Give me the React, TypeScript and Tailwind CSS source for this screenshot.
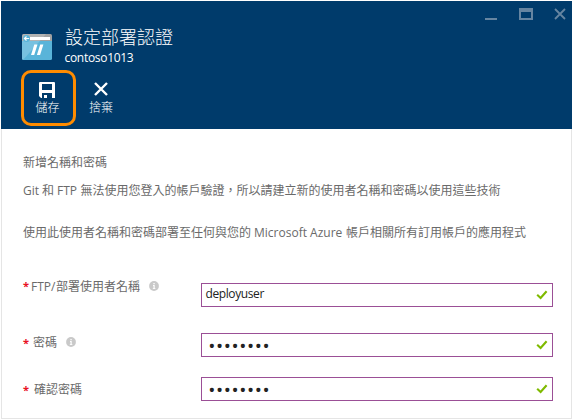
import type { ReactNode } from 'react';

const Latin = ({ className, children }: { className: string; children: ReactNode }) => (
  <span className={`inline-block whitespace-pre ${className}`}>{children}</span>
);

const InfoIcon = ({ className }: { className: string }) => (
  <svg viewBox="0 0 10 10" className={`h-2.5 w-2.5 shrink-0 ${className}`}>
    <circle cx="5" cy="5" r="4.9" fill="#c9c9c9" />
    <path d="M4 4.1h1.7v3.2h.7v.8H3.8v-.8h.7V4.9H4zM4.4 1.9h1.3v1.3H4.4z" fill="#fff" />
  </svg>
);

const CheckIcon = () => (
  <svg viewBox="0 0 12 10" className="h-2.5 w-3">
    <path d="M1.2 4.8 4.6 8 10.6 1.2" fill="none" stroke="#7fba00" strokeWidth="2.1" />
  </svg>
);

const AppIcon = () => (
  <svg viewBox="0 0 30 26" className="h-[26px] w-[30px] shrink-0">
    <path d="M0 7h30v17.5q0 1.5-1.5 1.5h-27Q0 26 0 24.5z" fill="#59b4d9" />
    <path d="M1.5 0h27Q30 0 30 1.5V7H0V1.5Q0 0 1.5 0z" fill="#a0a1a2" />
    <path d="M1.5 0H24L1 26Q0 26 0 24.5v-23Q0 0 1.5 0z" fill="#fff" fillOpacity=".18" />
    <path d="M8 3h20v3H8z" fill="#fff" />
    <circle cx="4.5" cy="4.5" r="3.5" fill="#59b4d9" />
    <path d="M7.2 4.5H2.5m2-2-2 2 2 2" stroke="#fff" strokeWidth="1.2" fill="none" />
    <path d="M12.3 10.5h3.2L12.2 21H9zM18.2 10.5h3.2L18.1 21h-3.2z" fill="#fff" />
  </svg>
);

function Field({ label, value, dots = false }: { label: ReactNode; value: string; dots?: boolean }) {
  return (
    <div className="flex h-6">
      <div className="flex w-[178px] shrink-0">{label}</div>
      <div className="flex h-6 w-[352px] items-center justify-between border border-[#9b4f96] pr-1 text-[#222]">
        {dots ? (
          <div className="ml-[6px] flex pt-[2px]">
            {value.split('').map((c, i) => (
              <span key={i} className="flex h-3 w-[7.75px] items-center justify-center text-[19px] leading-3">{c}</span>
            ))}
          </div>
        ) : (
          <span className="ml-[3.5px] -mt-0.5 text-[12px] tracking-[-0.4px]">{value}</span>
        )}
        <CheckIcon />
      </div>
    </div>
  );
}

const Star = ({ className }: { className: string }) => (
  <span className={`w-2 shrink-0 text-[11px] font-bold leading-4 text-[#e81123] ${className}`}>*</span>
);

export default function App() {
  return (
    <div className="h-[420px] w-[573px] overflow-hidden bg-white pl-px pt-px font-['Open_Sans','Noto_Sans_CJK_TC',sans-serif]">
      <div className="flex h-[418px] w-[571px] flex-col border-b border-[#e5e5e5]">
        <header className="h-32 shrink-0 bg-[#003b6b] text-white">
          <div className="flex h-[26px] justify-end pr-[5px] pt-[7px]">
            <svg viewBox="0 0 82 12" className="h-3 w-[82px]" fill="none" stroke="#6685a1">
              <path d="M0 11h12" strokeWidth="2" />
              <path d="M34 0h14v4H34z" fill="#6685a1" stroke="none" />
              <path d="M35 1h12v10H35z" strokeWidth="2" />
              <path d="M70 1l10 10M80 1 70 11" strokeWidth="1.8" />
            </svg>
          </div>
          <div className="flex h-[43px] pl-[21px]">
            <div className="pt-[7px]"><AppIcon /></div>
            <div className="ml-[13px] flex flex-col">
              <h1 className="h-[23px] whitespace-nowrap text-[18px] font-light leading-[20px]">設定部署認證</h1>
              <span className="ml-[-0.5px] text-[12px] leading-4 tracking-[-0.3px]">contoso1013</span>
            </div>
          </div>
          <div className="flex pl-5">
            <button className="flex h-14 w-[55px] flex-col items-center rounded-[10px] border-[3px] border-[#ff8c00]">
              <svg viewBox="0 0 16 16" className="mt-[9px] ml-[-3px] h-4 w-4 shrink-0">
                <path fillRule="evenodd" d="M1 0h14q1 0 1 1v15h-3v-5H3v5H2l-2-2V1q0-1 1-1zM3 2v6h10V2z" fill="#fff" />
                <path d="M5 13h3v3H5z" fill="#fff" />
              </svg>
              <span className="ml-[-2px] mt-[2px] text-[12px] font-light leading-4">儲存</span>
            </button>
            <button className="ml-[10px] flex h-14 w-[30px] flex-col items-center">
              <svg viewBox="0 0 14 14" className="mt-[12px] h-3.5 w-3.5 shrink-0">
                <path d="m1 1 12 12M13 1 1 13" stroke="#fff" strokeWidth="2.4" />
              </svg>
              <span className="mt-1 whitespace-nowrap text-[12px] font-light leading-4">捨棄</span>
            </button>
          </div>
        </header>
        <main className="grow border-x border-[#e5e5e5] pl-[21px] text-[12px] leading-4 whitespace-nowrap text-[#6a6a6a]">
          <h2 className="mt-[26px] h-7">新增名稱和密碼</h2>
          <p className="h-[42px]"><Latin className="w-[19px]">Git </Latin>和<Latin className="w-[26.5px] pl-[3px]">FTP</Latin>無法使用您登入的帳戶驗證，所以請建立新的使用者名稱和密碼以使用這些技術</p>
          <p className="h-4">使用此使用者名稱和密碼部署至任何與您的<Latin className="w-[95px] pl-[3px]">Microsoft Azure</Latin>帳戶相關所有訂用帳戶的應用程式</p>
          <div className="mt-[42px] flex flex-col">
            <Field value="deployuser" label={<><Star className="mt-[-5px]" /><span className="mt-[-4px]"><Latin className="w-[25px]">FTP/</Latin>部署使用者名稱</span><InfoIcon className="ml-[9px] mt-[-2px]" /></>} />
            <div className="mt-[26px]">
              <Field dots value="••••••••" label={<><Star className="mt-[2px]" /><span className="ml-[2px] mt-[2px]">密碼</span><InfoIcon className="ml-[9px] mt-[4px]" /></>} />
            </div>
            <div className="mt-5">
              <Field dots value="••••••••" label={<><Star className="mt-[5px]" /><span className="ml-[3px] mt-[5px]">確認密碼</span></>} />
            </div>
          </div>
        </main>
      </div>
    </div>
  );
}
